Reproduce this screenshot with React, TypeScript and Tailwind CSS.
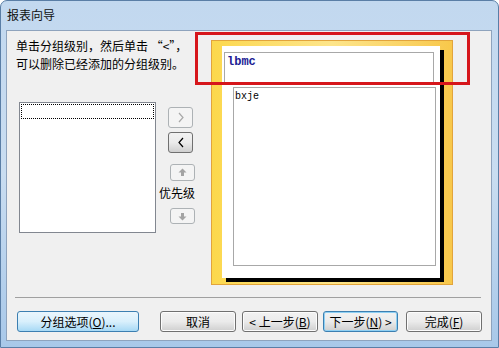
import React from 'react'

const cjk = { fontFamily: '"Noto Sans CJK SC", "Liberation Sans", sans-serif' }
const mono = { fontFamily: '"Liberation Mono", "DejaVu Sans Mono", monospace' }

function Btn({ children, className = '', tone = 'normal' }: { children: React.ReactNode; className?: string; tone?: 'normal' | 'hover' | 'default' }) {
  const look =
    tone === 'hover'
      ? 'border-[#3c7fb1] bg-gradient-to-b from-[#eaf6fd] via-[#d9f0fc] to-[#a7d9f5]'
      : tone === 'default'
        ? 'border-[#3c7fb1] bg-gradient-to-b from-[#f2f2f2] via-[#ebebeb] to-[#cfcfcf] shadow-[inset_0_0_0_1px_#8fd0f3]'
        : 'border-[#707070] bg-gradient-to-b from-[#f2f2f2] via-[#ebebeb] to-[#cfcfcf] shadow-[inset_0_0_0_1px_#fcfcfc]'
  return (
    <div className={`h-[21px] rounded-[3px] border flex items-center justify-center text-[12px] leading-none text-black ${look} ${className}`} style={cjk}>
      {children}
    </div>
  )
}

function Chevron({ dir, color }: { dir: 'left' | 'right'; color: string }) {
  return (
    <svg width="8" height="11" viewBox="0 0 8 11">
      <path d={dir === 'right' ? 'M2 1 L6 5.5 L2 10' : 'M6 1 L2 5.5 L6 10'} fill="none" stroke={color} strokeWidth="1.2" />
    </svg>
  )
}

function Arrow({ up }: { up: boolean }) {
  return (
    <svg width="9" height="9" viewBox="0 0 9 9">
      <path d={up ? 'M4.5 0.5 L8.5 4.5 L6 4.5 L6 8 L3 8 L3 4.5 L0.5 4.5 Z' : 'M4.5 8.5 L8.5 4.5 L6 4.5 L6 1 L3 1 L3 4.5 L0.5 4.5 Z'} fill="#a3a3a3" />
    </svg>
  )
}

export default function App() {
  return (
    <div className="relative w-[499px] h-[348px] overflow-hidden rounded-t-[7px] border border-[#5a7ea6] bg-gradient-to-b from-[#c2d8ef] via-[#c9ddf1] to-[#a8c8e9]">
      <div className="h-[29px] pl-[6px] pt-[6px] text-[12px] leading-[16px] text-[#111]" style={cjk}>
        报表向导
      </div>

      <div className="ml-[5px] w-[486px] h-[311px] border border-[#8ea3bd] bg-[#f0f0f0] flex flex-col">
        <div className="flex h-[266px]">
          <div className="w-[204px] pl-[9px] pt-[6px] flex flex-col">
            <div className="text-[12px] leading-[18px] text-black" style={cjk}>
              <div>单击分组级别，然后单击 “&lt;”，</div>
              <div>可以删除已经添加的分组级别。</div>
            </div>
            <div className="flex mt-[29px]">
              <div className="ml-[3px] w-[137px] h-[131px] border border-[#828790] bg-white p-px">
                <div className="h-[15px] border border-dotted border-black" />
              </div>
              <div className="ml-[3px] w-[37px] pt-[5px] flex flex-col">
                <div className="ml-[9px] w-[25px] h-[21px] rounded-[3px] border border-[#adb2b5] bg-[#f4f4f4] flex items-center justify-center">
                  <Chevron dir="right" color="#a8a8a8" />
                </div>
                <div className="ml-[9px] mt-[4px] w-[25px] h-[21px] rounded-[3px] border border-[#707070] bg-gradient-to-b from-[#f2f2f2] via-[#ebebeb] to-[#cfcfcf] flex items-center justify-center">
                  <Chevron dir="left" color="#000" />
                </div>
                <div className="ml-[11px] mt-[11px] w-[25px] h-[17px] rounded-[3px] border border-[#adb2b5] bg-[#f4f4f4] flex items-center justify-center">
                  <Arrow up />
                </div>
                <div className="mt-[5px] text-[12px] leading-[14px] text-black" style={cjk}>
                  优先级
                </div>
                <div className="ml-[11px] mt-[8px] w-[25px] h-[16px] rounded-[3px] border border-[#adb2b5] bg-[#f4f4f4] flex items-center justify-center">
                  <Arrow up={false} />
                </div>
              </div>
            </div>
          </div>

          <div className="mt-[9px] w-[242px] h-[245px] border border-[#e2a43c] bg-gradient-to-r from-[#fcd84c] via-[#fde58a] to-[#f8c84a] pl-[10px] pt-[5px]">
            <div className="w-[218px] h-[232px] bg-white shadow-[4px_4px_0_#000] pt-[6px]">
              <div className="ml-[2px] w-[210px] h-[31px] border border-[#a8a8a8] pl-[2px] pt-[2px] text-[12px] leading-[14px] font-bold text-[#1b1b93]" style={mono}>
                lbmc
              </div>
              <div className="ml-[11px] mt-[4px] w-[203px] h-[179px] border border-[#a8a8a8] pl-[1px] pt-[3px] text-[10px] leading-[12px] text-black" style={mono}>
                bxje
              </div>
            </div>
          </div>
        </div>

        <div className="ml-[8px] mr-[10px] h-px bg-[#a0a0a0]" />

        <div className="flex mt-[13px] pl-[10px]">
          <Btn tone="hover" className="w-[122px]">分组选项(<u>O</u>)...</Btn>
          <Btn className="ml-[21px] w-[76px]">取消</Btn>
          <Btn className="ml-[6px] w-[76px]">&lt; 上一步(<u>B</u>)</Btn>
          <Btn tone="default" className="ml-[5px] w-[75px]">下一步(<u>N</u>) &gt;</Btn>
          <Btn className="ml-[8px] w-[76px]">完成(<u>F</u>)</Btn>
        </div>
      </div>

      <div className="absolute left-[194px] top-[31px] w-[275px] h-[53px] border-[3px] border-[#d6161b]" />
    </div>
  )
}
